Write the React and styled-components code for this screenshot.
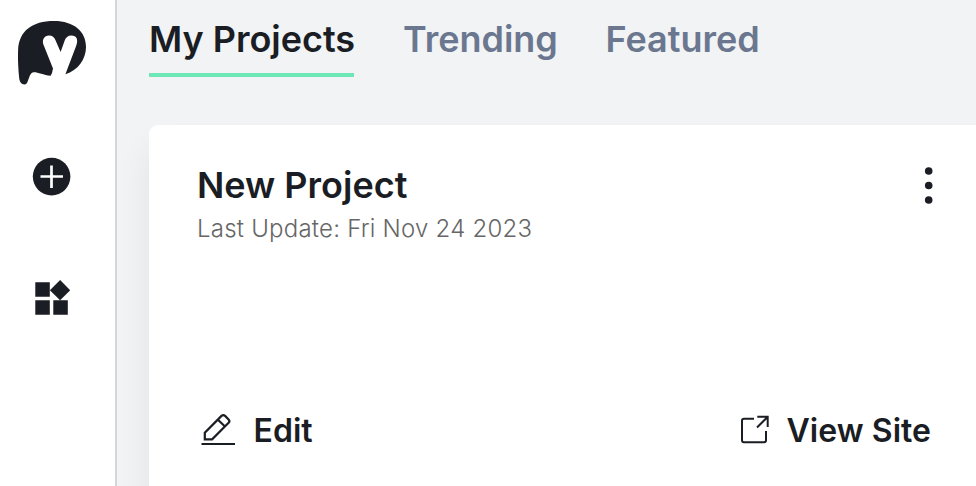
import React from "react";
import styled, { createGlobalStyle } from "styled-components";

const ink = "#1a1d24";

const GlobalStyle = createGlobalStyle`
  * { box-sizing: border-box; }
  body {
    margin: 0;
    overflow: hidden;
    background: #f1f3f5;
    color: ${ink};
    font-family: Inter, sans-serif;
  }
`;

const Page = styled.div`
  display: flex;
  width: 976px;
  height: 486px;
  overflow: hidden;
`;

const Sidebar = styled.nav`
  flex: none;
  display: flex;
  flex-direction: column;
  width: 117px;
  background: #fff;
  border-right: 2px solid #d1d8dd;
  svg { display: block; }
`;

const Logo = styled.svg`
  margin: 20px 0 0 17px;
`;

const NavIcon = styled.svg`
  margin: ${(p) => p.$top}px 0 0 ${(p) => p.$left}px;
`;

const Main = styled.main`
  flex: none;
  width: 940px;
  padding-left: 32px;
`;

const Tabs = styled.div`
  display: flex;
  gap: 49px;
  height: 77px;
  margin-bottom: 48px;
`;

const Tab = styled.div`
  height: 77px;
  padding-top: 17px;
  font-size: 36px;
  line-height: 44px;
  font-weight: 600;
  white-space: nowrap;
  width: ${(p) => p.$width}px;
  letter-spacing: -0.02px;
  color: ${(p) => (p.$active ? ink : "#6b778f")};
  border-bottom: 4px solid ${(p) => (p.$active ? "#6ee7b7" : "transparent")};
`;

const Card = styled.article`
  display: flex;
  flex-direction: column;
  justify-content: space-between;
  width: 908px;
  height: 370px;
  padding: 38px 125px 44px 48px;
  background: #fff;
  border-radius: 9px;
  box-shadow: 0 24px 34px rgba(0, 0, 0, 0.07);
`;

const CardHeader = styled.header`
  display: flex;
  justify-content: space-between;
  margin-right: -2px;
`;

const Title = styled.h2`
  margin: 0;
  font-size: 36px;
  line-height: 44px;
  font-weight: 600;
  white-space: nowrap;
`;

const Updated = styled.p`
  margin: 7px 0 0;
  font-size: 24px;
  line-height: 30px;
  font-weight: 300;
  letter-spacing: 0.23px;
  color: #666;
  white-space: nowrap;
`;

const MenuIcon = styled.svg`
  display: block;
  margin-top: 2px;
`;

const CardFooter = styled.footer`
  display: flex;
  justify-content: space-between;
  margin: 0 0 0 4px;
`;

const Action = styled.div`
  display: flex;
  align-items: center;
  gap: ${(p) => p.$gap}px;
  width: ${(p) => p.$width}px;
  height: 40px;
  font-size: 32px;
  line-height: 40px;
  font-weight: 600;
  letter-spacing: 0.05px;
  white-space: nowrap;
  svg {
    flex: none;
    margin-bottom: 4px;
  }
`;

export default function App() {
  return (
    <Page>
      <GlobalStyle />
      <Sidebar>
        <Logo width="70" height="66" viewBox="17 20 70 66">
          <path
            fill={ink}
            d="M24.500 84.500C20.500 84.500 19.200 80.500 19 76C18.500 70 17.700 60 18.100 50C19 31 32 21 54 21C74 21 86 31.500 86 47C86 59 78 70.500 65.400 74.300L76.200 45.800C78.600 39.500 76.500 35.500 71.500 35.500C67.800 35.500 65.700 37.600 64.700 40.500L60.600 52L55.600 40.500C54.300 37.300 52.300 35.500 49 35.500C44.200 35.500 41.600 40 43.600 45L53 68.400Q52.400 73 50.600 75.800C43 74.800 36.800 71.700 33.300 72.300C29.800 73 29.200 78.500 27.200 82.500C26.600 83.800 25.800 84.500 24.500 84.500Z"
          />
        </Logo>
        <NavIcon $top={71} $left={32} width="39" height="39" viewBox="0 0 39 39">
          <circle cx="19.600" cy="19.600" r="18.800" fill={ink} />
          <path d="M8.500 19.500H31M19.500 8.500V31" stroke="#fff" strokeWidth="2.700" />
        </NavIcon>
        <NavIcon $top={83} $left={35} width="36" height="37" viewBox="35 279 36 37">
          <path
            fill={ink}
            d="M35.300 282.300H49.800V296.800H35.300ZM35.300 300.300H49.800V314.800H35.300ZM53.300 300.300H67.800V314.800H53.300ZM60.100 279.900L70.200 290.200L60.100 300.300L49.900 290.200Z"
          />
        </NavIcon>
      </Sidebar>
      <Main>
        <Tabs>
          <Tab $active $width={205}>My Projects</Tab>
          <Tab $width={153.5}>Trending</Tab>
          <Tab $width={154}>Featured</Tab>
        </Tabs>
        <Card>
          <CardHeader>
            <div>
              <Title>New Project</Title>
              <Updated>Last Update: Fri Nov 24 2023</Updated>
            </div>
            <MenuIcon width="10" height="40" viewBox="0 0 10 40" fill={ink}>
              <circle cx="4.700" cy="6" r="3.800" />
              <circle cx="4.700" cy="20.500" r="3.800" />
              <circle cx="4.700" cy="35" r="3.800" />
            </MenuIcon>
          </CardHeader>
          <CardFooter>
            <Action $gap={17.5} $width={112}>
              <svg width="35" height="34" viewBox="201 412 35 34" fill="none" stroke={ink} strokeWidth="2.200">
                <path d="M201.500 444H235" />
                <path d="M204.800 439.300V432.600L221.500 415.900Q223.300 414.200 225.100 415.900L228.600 419.400Q230.200 421.100 228.600 422.800L212.100 439.300ZM217.900 419.700L225 426.500" />
              </svg>
              Edit
            </Action>
            <Action $gap={16.5} $width={192}>
              <svg width="30" height="30" viewBox="740 414 30 30" fill="none" stroke={ink} strokeWidth="2">
                <path d="M754 418.800H744Q742 418.800 742 420.800V440.200Q742 442.200 744 442.200H764Q766 442.200 766 440.200V431M757.300 416.700H767.700V427M767.500 417L757 427.500" />
              </svg>
              View Site
            </Action>
          </CardFooter>
        </Card>
      </Main>
    </Page>
  );
}
